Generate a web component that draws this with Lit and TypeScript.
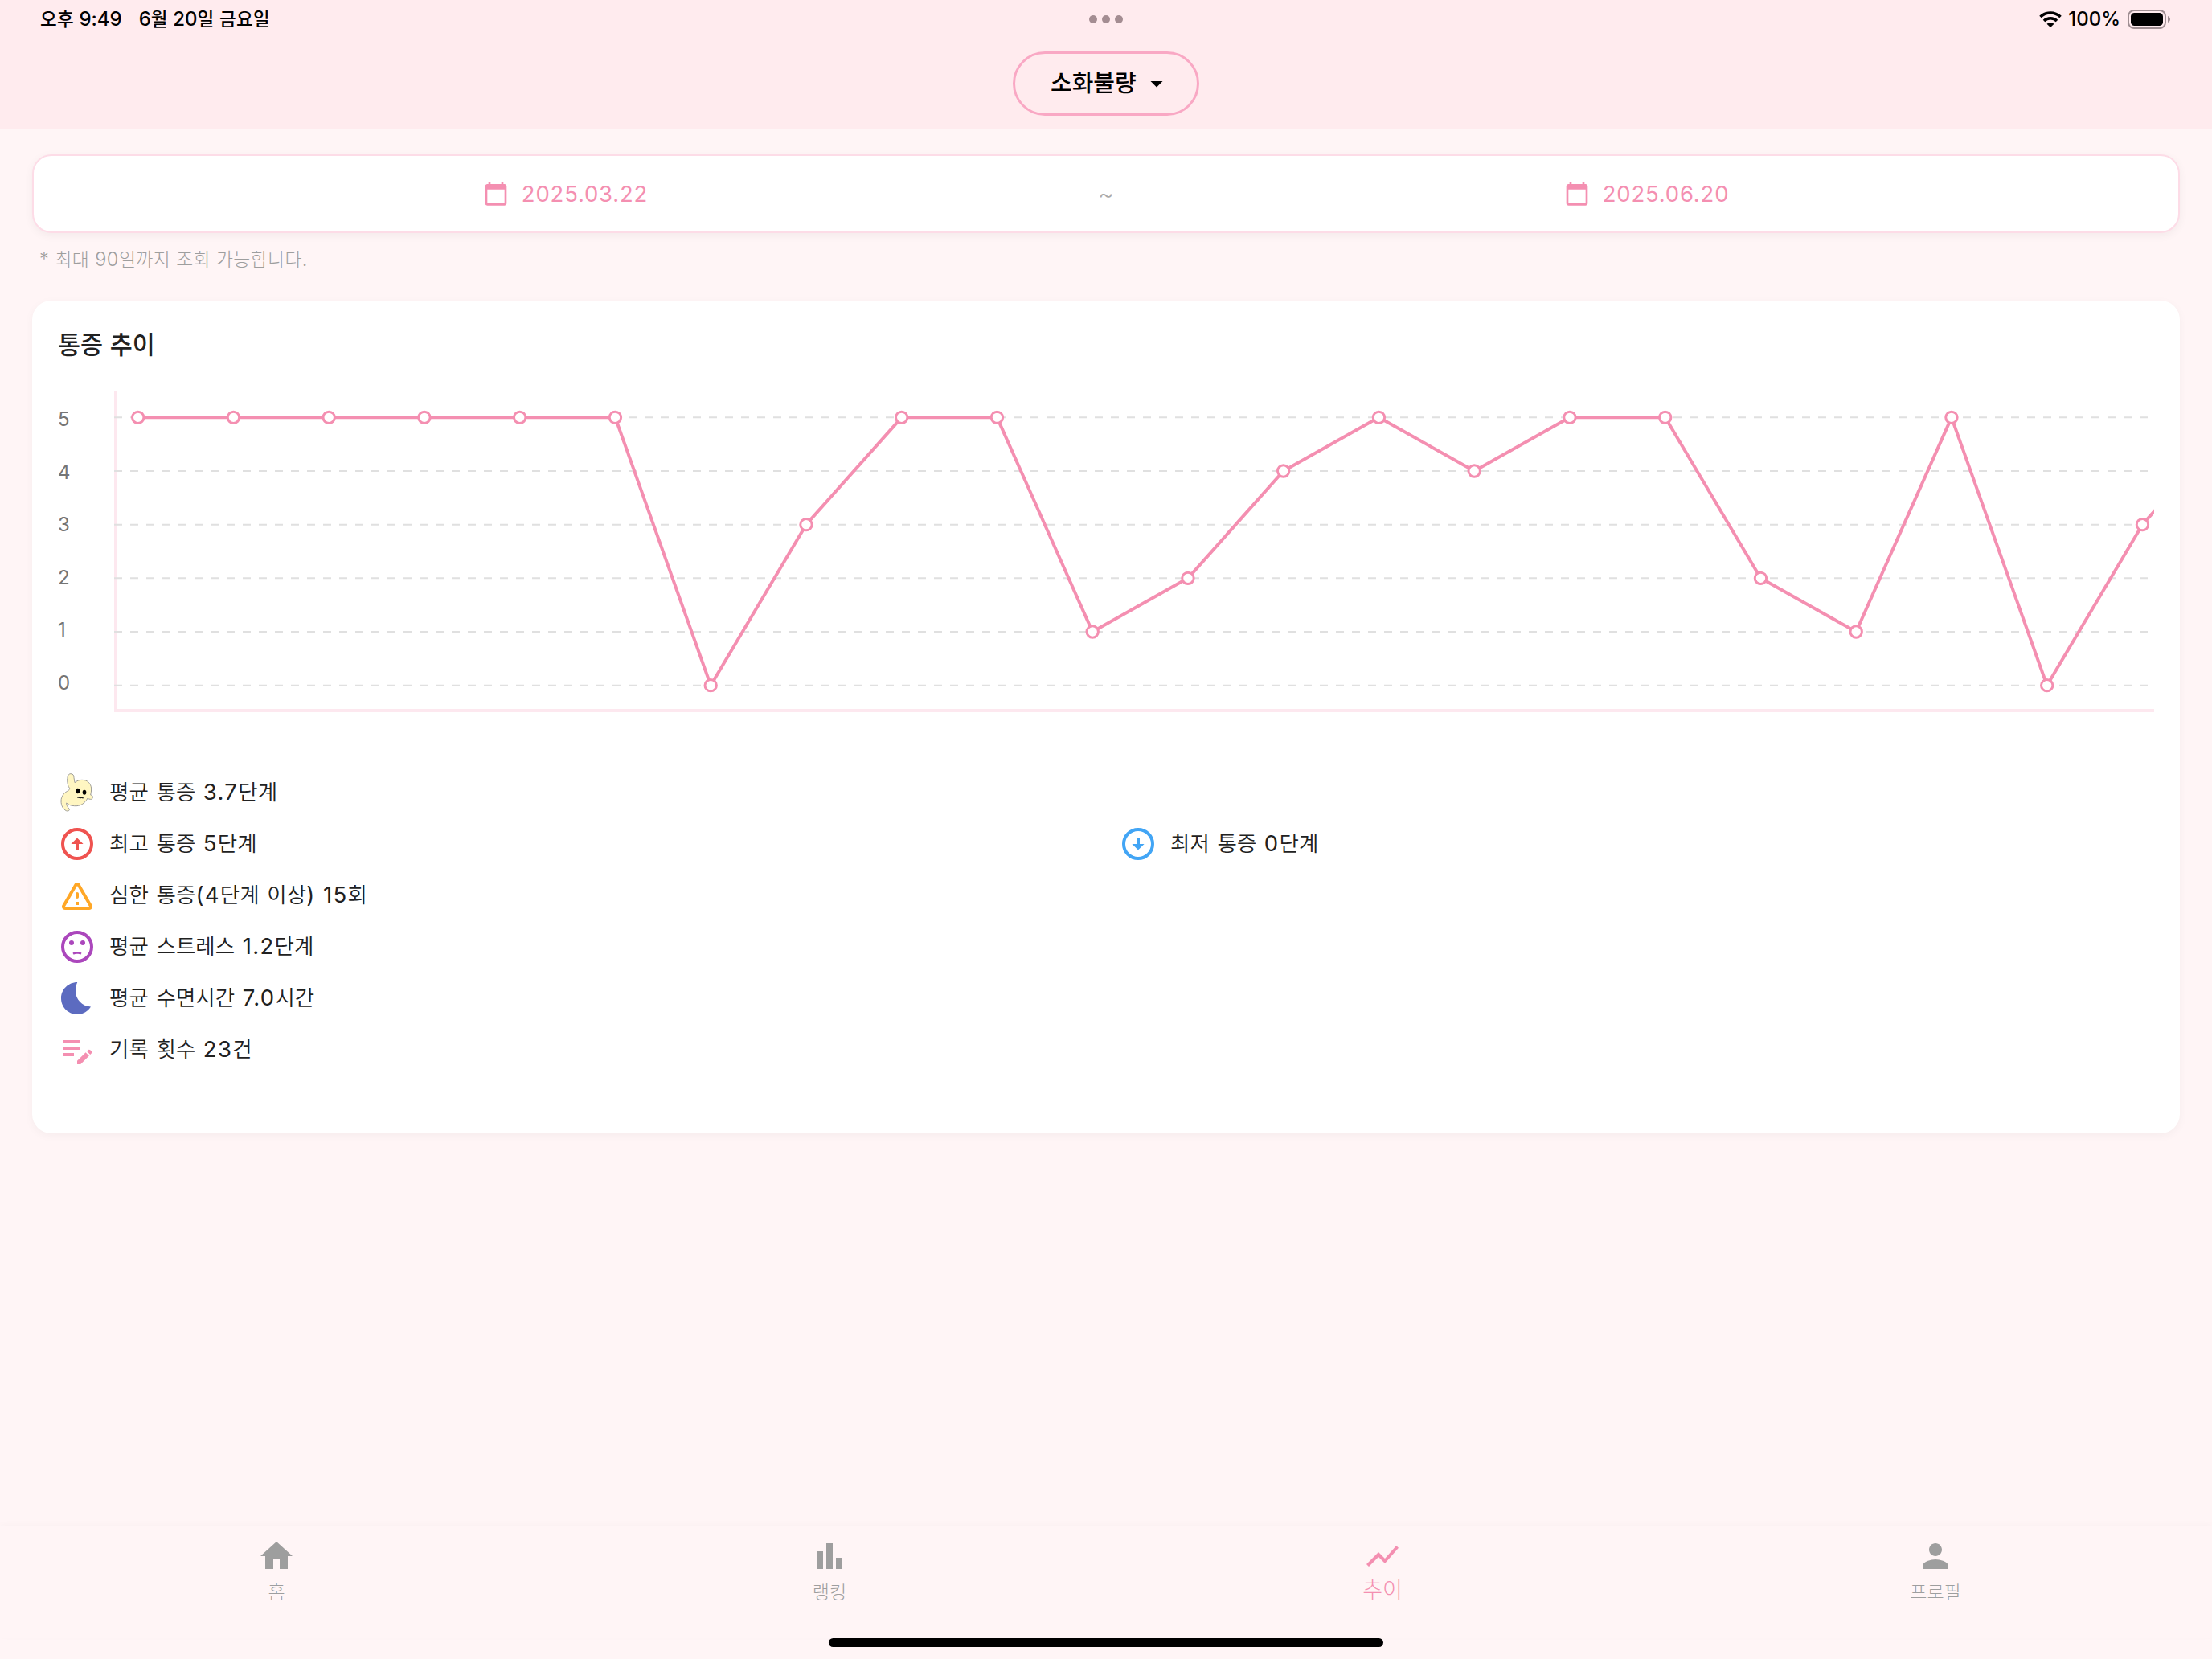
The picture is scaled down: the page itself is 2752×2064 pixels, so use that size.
import { LitElement, html, css, svg, nothing } from 'lit';
import type { TemplateResult } from 'lit';
import { customElement, property, state } from 'lit/decorators.js';
import { classMap } from 'lit/directives/class-map.js';

interface Stat {
  icon: string;
  label: string;
}

interface Tab {
  id: string;
  label: string;
}

const HANGUL = /([\u3131-\uD79D]+)/;

// Hangul runs use their own size and tracking next to the latin digits
const mixed = (text: string) =>
  text
    .split(HANGUL)
    .filter((part) => part !== '')
    .map((part) => (HANGUL.test(part) ? html`<span class="ko">${part}</span>` : part));

const textStyles = css`
  .ko {
    font-family: 'Noto Sans CJK KR', sans-serif;
    font-size: var(--ko-size, 0.95em);
    font-weight: var(--ko-weight, 400);
    letter-spacing: var(--ko-spacing, 0);
  }
`;

const icons: Record<string, TemplateResult> = {
  calendar: svg`<path d="M20 3h-1V1h-2v2H7V1H5v2H4c-1.1 0-2 .9-2 2v16c0 1.1.9 2 2 2h16c1.1 0 2-.9 2-2V5c0-1.1-.9-2-2-2zm0 18H4V8h16v13z"/>`,
  dropdown: svg`<path d="m7 10 5 5 5-5z"/>`,
  up: svg`
    <circle cx="12" cy="12" r="9" fill="none" stroke="currentColor" stroke-width="2"/>
    <path d="M12 8.2l3.8 3.8H13v4h-2v-4H8.2z"/>`,
  down: svg`
    <circle cx="12" cy="12" r="9" fill="none" stroke="currentColor" stroke-width="2"/>
    <path d="M12 15.8l3.8-3.8H13V8h-2v4H8.2z"/>`,
  warning: svg`<path d="M12 5.99 19.53 19H4.47L12 5.99M2.74 18c-.77 1.33.19 3 1.73 3h15.06c1.54 0 2.5-1.67 1.73-3L13.73 4.99c-.77-1.33-2.69-1.33-3.46 0L2.74 18zM11 11v2c0 .55.45 1 1 1s1-.45 1-1v-2c0-.55-.45-1-1-1s-1 .45-1 1zm0 5h2v2h-2z"/>`,
  stress: svg`
    <circle cx="12" cy="12" r="9" fill="none" stroke="currentColor" stroke-width="2"/>
    <circle cx="8.5" cy="9.5" r="1.5"/>
    <circle cx="15.5" cy="9.5" r="1.5"/>
    <path d="M12 15c-1.2 0-2.2.3-2.8.9l.7 1c.5-.3 1.2-.5 2.1-.5s1.6.2 2.1.5l.7-1c-.6-.6-1.6-.9-2.8-.9z"/>`,
  moon: svg`<path d="M12.1 2C6.5 2 2 6.5 2 12s4.5 10 10 10c3.6 0 6.7-1.9 8.5-4.8C15 17 11 12.6 11 7.5c0-2 .4-3.9 1.1-5.5z"/>`,
  record: svg`<path d="M3 10h11v2H3v-2zm0-2h11V6H3v2zm0 8h7v-2H3v2zm15.01-3.13.71-.71c.39-.39 1.02-.39 1.41 0l.71.71c.39.39.39 1.02 0 1.41l-.71.71-2.12-2.12zm-.71.71-5.3 5.3V21h2.12l5.3-5.3-2.12-2.12z"/>`,
  home: svg`<path d="M10 20v-6h4v6h5v-8h3L12 3 2 12h3v8z"/>`,
  ranking: svg`<path d="M4 9h4v11H4zM16 13h4v7h-4zM10 4h4v16h-4z"/>`,
  trend: svg`<path d="m3.5 18.49 6-6.01 4 4L22 6.92l-1.41-1.41-7.09 7.97-4-4L2 16.99z"/>`,
  profile: svg`<path d="M12 12c2.21 0 4-1.79 4-4s-1.79-4-4-4-4 1.79-4 4 1.79 4 4 4zm0 2c-2.67 0-8 1.34-8 4v2h16v-2c0-2.66-5.33-4-8-4z"/>`,
};

const icon = (name: string) => html`
  <svg class="icon ${name}" viewBox="0 0 24 24" fill="currentColor">${icons[name]}</svg>
`;

const ghost = html`
  <svg class="icon" viewBox="36 66 144 144">
    <path
      d="M72 92C70 76 76 68 84 68c9 0 12 6 12 15l3 18c8-7 17-10 27-10 20 0 33 12 35 32
         0 9-1 17-3 24 5 1 9 4 8 9-1 6-5 8-9 7-4 0-7-2-10-4-10 20-28 31-50 29-13-1-22-4-29-11
         -1 8 4 14 10 22 4 6-4 10-11 7-12-6-19-20-19-36 0-17 10-30 23-37 7-4 10-7 9-11-6-7-9-17-9-33z"
      fill="#fff6c2"
      stroke="#9f9e98"
      stroke-width="3"
    />
    <ellipse cx="110" cy="132" rx="8" ry="9.5" fill="#000" />
    <ellipse cx="135" cy="137" rx="7" ry="9" fill="#000" />
    <path d="M109 157c6-3 9 3 14 0 3-1 5 0 8 2" fill="none" stroke="#222" stroke-width="4" />
  </svg>
`;

@customElement('pain-chart')
export class PainChart extends LitElement {
  static styles = css`
    :host {
      display: flex;
      height: 400px;
    }

    .levels {
      display: flex;
      flex-direction: column;
      width: 70px;
      padding-top: 3px;
      box-sizing: border-box;
      color: #757575;
      font-family: Inter, sans-serif;
      font-size: 24px;
      font-weight: 400;
    }

    .level {
      height: 65.6px;
      line-height: 65.6px;
    }

    .plot {
      flex: 1;
      height: 400px;
    }

    .axis {
      fill: none;
      stroke: #fde8ef;
      stroke-width: 4;
    }

    .grid {
      stroke: #e0e0e0;
      stroke-width: 2;
      stroke-dasharray: 10 10;
    }

    .line {
      fill: none;
      stroke: #f48fb1;
      stroke-width: 4;
      stroke-linejoin: round;
    }

    .dot {
      fill: #fff;
      stroke: #f48fb1;
      stroke-width: 3;
    }
  `;

  @property({ type: Array })
  values: number[] = [];

  private readonly levels = [5, 4, 3, 2, 1, 0];

  private px(index: number): number {
    return 29.7 + index * 118.75;
  }

  private py(value: number): number {
    return ((5.5 - value) * 400) / 6;
  }

  render() {
    const points = this.values.map((v, i) => `${this.px(i)},${this.py(v)}`).join(' ');

    return html`
      <div class="levels">
        ${this.levels.map((level) => html`<div class="level">${level}</div>`)}
      </div>
      <svg class="plot" viewBox="0 0 2538 400" preserveAspectRatio="xMinYMin slice">
        <path class="axis" d="M2 0V398H2538" />
        ${this.levels.map((level) => svg`
          <line class="grid" x1="0" x2="2538" y1=${this.py(level)} y2=${this.py(level)} />
        `)}
        <polyline class="line" points=${points} />
        ${this.values.map((v, i) => svg`
          <circle class="dot" cx=${this.px(i)} cy=${this.py(v)} r="7.2" />
        `)}
      </svg>
    `;
  }
}

@customElement('app-root')
export class AppRoot extends LitElement {
  static styles = [
    textStyles,
    css`
      :host {
        display: flex;
        flex-direction: column;
        width: 100%;
        height: 2064px;
        background: #fff5f6;
        color: #212121;
        font-family: Inter, 'Noto Sans CJK KR', sans-serif;
        line-height: 1;
      }

      .icon {
        display: block;
        flex: none;
        width: 48px;
        height: 48px;
      }

      .header {
        height: 160px;
        background: #ffebee;
      }

      .status-bar {
        display: grid;
        grid-template-columns: 1fr auto 1fr;
        align-items: center;
        height: 48px;
        padding: 0 51px 0 50px;
        color: #000;
        font-size: 24px;
        font-weight: 500;
        --ko-weight: 500;
        --ko-size: 22.5px;
        --ko-spacing: 0.3px;
      }

      .clock {
        display: flex;
        gap: 21px;
        padding-bottom: 1px;
        white-space: pre;
      }

      .multitask {
        display: flex;
        gap: 6px;
      }

      .multitask-dot {
        width: 10px;
        height: 10px;
        border-radius: 50%;
        background: #a48d92;
      }

      .system {
        display: flex;
        justify-content: flex-end;
        align-items: center;
      }

      .wifi {
        width: 28px;
        height: 20px;
        margin-right: 8px;
      }

      .battery {
        width: 54px;
        height: 24px;
        margin-left: 9px;
      }

      .selector-row {
        display: flex;
        justify-content: center;
        padding-top: 16px;
      }

      .selector {
        display: flex;
        align-items: center;
        justify-content: space-between;
        box-sizing: border-box;
        width: 232px;
        height: 80px;
        padding: 0 32px 0 44px;
        border: 3px solid #f9a8c4;
        border-radius: 40px;
        color: #000;
        --ko-size: 29px;
        --ko-weight: 500;
      }

      .selector-label {
        padding-bottom: 6px;
      }

      .dropdown {
        width: 36px;
        height: 36px;
      }

      .content {
        flex: 1;
        padding: 32px 40px 0;
      }

      .range {
        display: grid;
        grid-template-columns: 1fr 22px 1fr;
        align-items: center;
        box-sizing: border-box;
        height: 98px;
        background: #fff;
        border: 2px solid #fddce7;
        border-radius: 24px;
        box-shadow: 0 3px 12px rgba(0, 0, 0, 0.05);
      }

      .date {
        display: flex;
        align-items: center;
        justify-content: center;
        gap: 16px;
        color: #f48fb1;
        font-size: 27.5px;
        letter-spacing: 0.8px;
      }

      .date-text {
        padding-top: 2px;
      }

      .calendar {
        width: 32px;
        height: 32px;
      }

      .tilde {
        color: #aaa;
        font-size: 30px;
        font-weight: 300;
        text-align: center;
      }

      .hint {
        height: 84px;
        box-sizing: border-box;
        padding: 21px 0 0 9px;
        color: #9e9e9e;
        font-size: 23.5px;
        font-weight: 300;
        letter-spacing: 0.5px;
        --ko-size: 22.8px;
        --ko-weight: 300;
        --ko-spacing: 0.4px;
      }

      .card {
        box-sizing: border-box;
        height: 1036px;
        padding: 38px 32px 0;
        background: #fff;
        border-radius: 24px;
        box-shadow: 0 3px 12px rgba(0, 0, 0, 0.04);
      }

      .card-title {
        height: 74px;
        margin: 0;
        font-size: 30px;
        word-spacing: 1.5px;
        --ko-size: 30.5px;
        --ko-weight: 500;
      }

      .stats {
        display: grid;
        grid-template-columns: 1fr 1fr;
        gap: 16px 32px;
        margin-top: 76px;
      }

      .stat {
        display: flex;
        align-items: center;
        gap: 16px;
        height: 48px;
        font-size: 27.5px;
        font-weight: 400;
        letter-spacing: 1.3px;
        word-spacing: 0.4px;
        --ko-size: 26.5px;
        --ko-weight: 350;
        --ko-spacing: 0.1px;
      }

      .stat-text {
        padding-bottom: 1px;
      }

      .stat:not(.paired) {
        grid-column: 1 / -1;
      }

      .up { color: #ef5350; }
      .down { color: #42a5f5; }
      .warning { color: #ffa726; }
      .stress { color: #ab47bc; }
      .moon { color: #5c6bc0; }
      .record { color: #f48fb1; }

      .tabs {
        display: grid;
        grid-template-columns: repeat(4, 1fr);
        height: 140px;
        box-shadow: 0 -2px 8px rgba(0, 0, 0, 0.02);
      }

      .tab {
        display: flex;
        flex-direction: column;
        align-items: center;
        padding-top: 14px;
        color: #9e9e9e;
        --ko-size: 23px;
        --ko-weight: 300;
      }

      .tab-label {
        margin-top: 8px;
      }

      .tab.active {
        color: #f48fb1;
        --ko-size: 27px;
      }

      .tab.active .tab-label {
        margin-top: 3px;
      }

      .home-indicator {
        width: 690px;
        height: 11px;
        margin: 0 auto 15px;
        border-radius: 6px;
        background: #000;
      }
    `,
  ];

  @state()
  private activeTab = 'trend';

  private readonly painLevels = [
    5, 5, 5, 5, 5, 5, 0, 3, 5, 5, 1, 2, 4, 5, 4, 5, 5, 2, 1, 5, 0, 3, 5,
  ];

  private readonly stats: Stat[] = [
    { icon: 'ghost', label: '평균 통증 3.7단계' },
    { icon: 'up', label: '최고 통증 5단계' },
    { icon: 'down', label: '최저 통증 0단계' },
    { icon: 'warning', label: '심한 통증(4단계 이상) 15회' },
    { icon: 'stress', label: '평균 스트레스 1.2단계' },
    { icon: 'moon', label: '평균 수면시간 7.0시간' },
    { icon: 'record', label: '기록 횟수 23건' },
  ];

  private readonly tabs: Tab[] = [
    { id: 'home', label: '홈' },
    { id: 'ranking', label: '랭킹' },
    { id: 'trend', label: '추이' },
    { id: 'profile', label: '프로필' },
  ];

  private renderStatusBar() {
    return html`
      <div class="status-bar">
        <div class="clock">
          <span>${mixed('오후 9:49')}</span>
          <span>${mixed('6월 20일 금요일')}</span>
        </div>
        <div class="multitask">
          ${[0, 1, 2].map(() => html`<span class="multitask-dot"></span>`)}
        </div>
        <div class="system">
          <svg class="wifi" viewBox="0 0 28 20">
            <g fill="none" stroke="#000" stroke-width="3.6">
              <path d="M1.5 7A18 18 0 0 1 26.5 7" />
              <path d="M6 12A11.5 11.5 0 0 1 22 12" />
            </g>
            <path d="M9.5 15.8a6.5 6.5 0 0 1 9 0L14 20z" />
          </svg>
          <span>100%</span>
          <svg class="battery" viewBox="0 0 54 24">
            <rect x="1" y="1" width="46" height="22" rx="7" fill="none" stroke="#a08f93" stroke-width="2" />
            <rect x="4" y="4" width="40" height="16" rx="4.5" />
            <path d="M50 8c4 1.5 4 6.5 0 8z" fill="#a08f93" />
          </svg>
        </div>
      </div>
    `;
  }

  private renderDate(date: string) {
    return html`
      <div class="date">
        ${icon('calendar')}
        <span class="date-text">${date}</span>
      </div>
    `;
  }

  private renderStat(stat: Stat) {
    const paired = stat.icon === 'up' || stat.icon === 'down';
    return html`
      <div class=${classMap({ stat: true, paired })}>
        ${stat.icon === 'ghost' ? ghost : icon(stat.icon)}
        <span class="stat-text">${mixed(stat.label)}</span>
      </div>
    `;
  }

  private renderTab(tab: Tab) {
    const active = tab.id === this.activeTab;
    return html`
      <div
        class=${classMap({ tab: true, active })}
        aria-current=${active ? 'page' : nothing}
        @click=${() => (this.activeTab = tab.id)}
      >
        ${icon(tab.id)}
        <span class="tab-label">${mixed(tab.label)}</span>
      </div>
    `;
  }

  render() {
    return html`
      <header class="header">
        ${this.renderStatusBar()}
        <div class="selector-row">
          <div class="selector">
            <span class="selector-label">${mixed('소화불량')}</span>
            ${icon('dropdown')}
          </div>
        </div>
      </header>

      <main class="content">
        <div class="range">
          ${this.renderDate('2025.03.22')}
          <span class="tilde">~</span>
          ${this.renderDate('2025.06.20')}
        </div>
        <div class="hint">${mixed('* 최대 90일까지 조회 가능합니다.')}</div>

        <section class="card">
          <h2 class="card-title">${mixed('통증 추이')}</h2>
          <pain-chart .values=${this.painLevels}></pain-chart>
          <div class="stats">${this.stats.map((stat) => this.renderStat(stat))}</div>
        </section>
      </main>

      <nav class="tabs">${this.tabs.map((tab) => this.renderTab(tab))}</nav>
      <div class="home-indicator"></div>
    `;
  }
}
